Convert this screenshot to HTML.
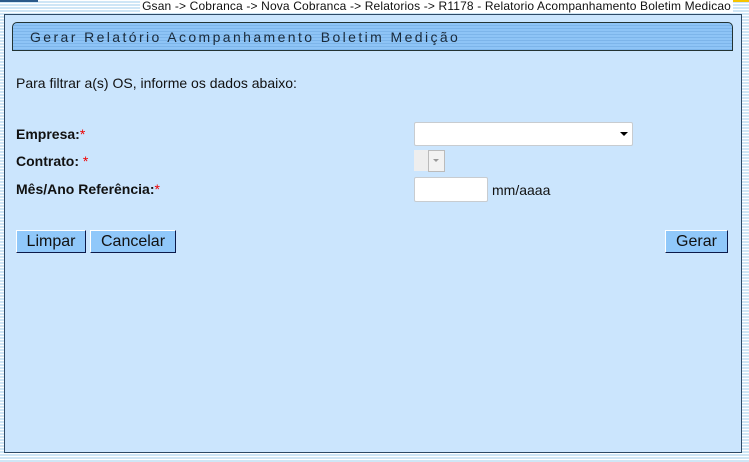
<!DOCTYPE html>
<html><head><meta charset="utf-8"><style>
body{margin:0;width:749px;height:462px;overflow:hidden;font-family:"Liberation Sans",Arial,sans-serif;
background:repeating-linear-gradient(to bottom,#fff 0,#fff 1px,#cfe6f6 1px,#cfe6f6 3px);position:relative}
.topdark{position:absolute;left:0;top:0;width:38px;height:2px;background:#2b5a8a}
.toporange{position:absolute;left:370px;top:0;width:379px;height:2px;background:#f5c400}
.crumb{position:absolute;right:16px;top:-1px;font-size:12px;color:#111;background:#fff;padding:0 2px;line-height:14px;letter-spacing:0.15px}
.panel{position:absolute;left:4px;top:14px;width:736px;height:437px;background:#cbe5fd;border:1px solid #2e4a66}
.hdr{position:absolute;left:7px;top:7px;height:29px;border:1px solid #233;border-radius:5px 5px 0 0;
background:repeating-linear-gradient(to bottom,#8ec4f6 0,#8ec4f6 2px,#7db5ea 2px,#7db5ea 3px);
font-size:14px;letter-spacing:2.4px;color:#1a2a3a;line-height:29px;padding-left:17px;box-sizing:border-box;width:721px}
.t{position:absolute;font-size:14px;color:#111}
.b{font-weight:bold;font-size:14px}
.r{color:#e00;font-weight:normal}
.inp{position:absolute;background:#fff;border:1px solid #c8ccd0;border-radius:2px}
.btn{position:absolute;height:23px;background:#90c8fa;border:1px solid;border-color:#fff #0c1a4a #0c1a4a #fff;box-sizing:border-box;font-size:16px;line-height:21px;text-align:center;color:#111}
</style></head><body>
<div class="topdark"></div><div class="toporange"></div>
<div class="crumb">Gsan -&gt; Cobranca -&gt; Nova Cobranca -&gt; Relatorios -&gt; R1178 - Relatorio Acompanhamento Boletim Medicao</div>
<div class="panel">
<div class="hdr">Gerar Relatório Acompanhamento Boletim Medição</div>
</div>
<div class="t" style="left:16px;top:75px">Para filtrar a(s) OS, informe os dados abaixo:</div>
<div class="t b" style="left:16px;top:126px">Empresa:<span class="r">*</span></div>
<div class="t b" style="left:16px;top:153px">Contrato: <span class="r">*</span></div>
<div class="t b" style="left:16px;top:181px">Mês/Ano Referência:<span class="r">*</span></div>
<div class="inp" style="left:414px;top:122px;width:217px;height:22px"><div style="position:absolute;right:4px;top:9px;border:4px solid transparent;border-top:4px solid #000;border-bottom:0"></div></div>
<div style="position:absolute;left:414px;top:150px;width:14px;height:21px;background:#eee"></div>
<div style="position:absolute;left:428px;top:150px;width:15px;height:20px;background:#f2f2f2;border:1px solid #bbb"><div style="position:absolute;left:4px;top:8px;border:3px solid transparent;border-top:3px solid #999;border-bottom:0"></div></div>
<div class="inp" style="left:414px;top:177px;width:72px;height:23px"></div>
<div class="t" style="left:492px;top:182px">mm/aaaa</div>
<div class="btn" style="left:16px;top:230px;width:70px">Limpar</div>
<div class="btn" style="left:90px;top:230px;width:86px">Cancelar</div>
<div class="btn" style="left:665px;top:230px;width:63px">Gerar</div>
</body></html>
